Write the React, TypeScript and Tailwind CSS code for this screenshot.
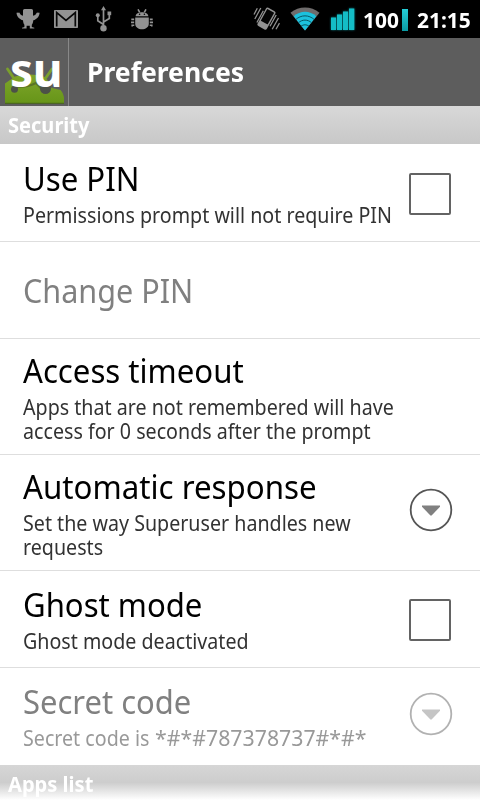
import React from "react";

type RowProps = {
  title: string;
  titleScale?: string;
  lines?: string[];
  code?: string;
  height: string;
  disabled?: boolean;
  last?: boolean;
  control?: "checkbox" | "menu";
};

function Line({ children, className }: { children: React.ReactNode; className: string }) {
  return <div className={`w-max origin-left whitespace-pre ${className}`}>{children}</div>;
}

function Checkbox() {
  return <div className="mr-[2px] mt-[2px] h-[42px] w-[42px] rounded-[2px] border-2 border-[#636363] bg-white" />;
}

function MenuButton({ disabled }: { disabled?: boolean }) {
  return (
    <svg width="44" height="44" viewBox="0 0 44 44" className={`mb-[6px] ${disabled ? "opacity-45" : ""}`}>
      <circle cx="22" cy="22" r="20.3" fill="none" stroke="#555" strokeWidth="1.8" />
      <path d="M13 17.5h18v1.2L22.6 27.6h-1.2L13 18.7z" fill="#808080" />
    </svg>
  );
}

function Row({ title, titleScale = "scale-x-[.944]", lines = [], code, height, disabled, last, control }: RowProps) {
  return (
    <div className={`flex shrink-0 items-center justify-between pl-[23px] pr-[27px] ${height} ${last ? "" : "border-b border-[#dedede]"}`}>
      <div className={`w-[372px] shrink-0 ${last ? "mb-[2px]" : ""}`}>
        <Line className={`text-[33px] leading-[39px] ${titleScale} ${disabled ? "text-[#808080]" : "text-black"}`}>{title}</Line>
        {lines.length > 0 && (
          <div className={`mt-[5px] text-[21px] leading-[24px] ${disabled ? "text-[#999]" : "text-[#323232]"}`}>
            {lines.map((l) => (
              <Line key={l} className="scale-x-[.936]">{l}</Line>
            ))}
          </div>
        )}
        {code && (
          <div className="mt-[5px] flex text-[21px] leading-[24px] text-[#999]">
            <div className="w-[132px]">
              <Line className="scale-x-[.936]">Secret code is</Line>
            </div>
            <Line className="scale-x-[1.014]">{code}</Line>
          </div>
        )}
      </div>
      {control === "checkbox" && <Checkbox />}
      {control === "menu" && <MenuButton disabled={disabled} />}
    </div>
  );
}

function GhostIcon() {
  return (
    <svg width="24" height="20" viewBox="0 0 24 20" fill="#929292">
      <path d="M7 1.5Q7 0 8.500 0h7q1.500 0 1.500 1.500v5.200q2.700-.3 4.200-3.500l.6.700.5-.500q.4.500 1.300.300c-.3 4-3 6.600-6.300 7.600-.2 2-.7 3.600-1.500 4.500v2.100l2.500.8v.800h-4.500v-2.700h-3.200v2.700H6v-.8l2.400-.8v-2.100C7.600 14.900 7.200 13.300 7 11.300 3.700 10.300.8 7.700.5 3.700q.9.200 1.300-.3l.5.500.7-.7Q4.500 6.400 7 6.700z" />
    </svg>
  );
}

function MailIcon() {
  return (
    <svg width="24" height="18" viewBox="0 0 24 18">
      <rect width="24" height="18" rx=".8" fill="#929292" />
      <path d="M2.700 16.500V2.500L12 10.500l9.300-8v14" fill="none" stroke="#080808" strokeWidth="1.700" />
    </svg>
  );
}

function UsbIcon() {
  return (
    <svg width="17" height="26" viewBox="0 0 17 26" fill="none" stroke="#929292" strokeWidth="1.700">
      <path d="M8.500 22V3M8.500 18.500l-5.700-3.700V10M8.500 16l5.800-3.500V8" />
      <path d="M8.500 0l2.500 4.300H6z" fill="#929292" stroke="none" />
      <circle cx="8.500" cy="22.200" r="3.200" fill="#929292" stroke="none" />
      <circle cx="2.800" cy="9.300" r="2" fill="#929292" stroke="none" />
      <path d="M12.500 5.500h3.700v3.700h-3.700z" fill="#929292" stroke="none" />
    </svg>
  );
}

function DebugIcon() {
  return (
    <svg width="22" height="21" viewBox="0 0 22 21" fill="#929292">
      <path d="M4.600 7.300C4.800 1.800 17.200 1.800 17.400 7.300zM4.200 8.500h13.600v6.300c0 7.300-13.600 7.300-13.600 0z" />
      <path d="M7 .3l1.700 3M15 .3l-1.700 3M3.200 10.400H.3M3.200 13.400H0M3.300 16.200h-2.100v1.300M18.800 10.400h2.900M18.800 13.400H22M18.700 16.200h2.100v1.300" fill="none" stroke="#929292" strokeWidth="1.600" />
      <circle cx="8.600" cy="5.300" r=".8" fill="#000" />
      <circle cx="13.400" cy="5.300" r=".8" fill="#000" />
    </svg>
  );
}

function VibrateIcon() {
  return (
    <svg width="27" height="24" viewBox="0 0 27 24" fill="none" stroke="#929292">
      <g transform="rotate(29 13.500 11.500)">
        <rect x="8.200" y="1.200" width="10.600" height="20.800" rx="1.800" fill="#929292" stroke="none" />
        <rect x="9.600" y="2.700" width="7.800" height="13.500" rx=".5" fill="#050505" stroke="none" />
      </g>
      <path d="M1 7.500L4.300 1.300M1.800 12L7.800 1M3.900 15.500L10.300 3.800M17 19.300L23.200 8M19.200 22.300L25.500 11M23 22.300l3.500-6.200" strokeWidth="1.300" />
    </svg>
  );
}

function WifiIcon() {
  return (
    <svg width="30" height="24" viewBox="0 0 30 24">
      <path d="M.5 5.800C8.800-1.300 21.200-1.300 29.500 5.800L15 23.500z" fill="#6f6c6c" />
      <path d="M3.700 9.300C10.200 3.300 19.800 3.300 26.300 9.300L15 23.500z" fill="#1cc1dc" />
      <path d="M5.700 12.600C11 7.600 19 7.600 24.300 12.600M8.400 15.800C12.200 12.200 17.800 12.200 21.600 15.800M11 19.200C13.300 17.300 16.700 17.300 19 19.200" fill="none" stroke="#075764" strokeWidth="1" />
    </svg>
  );
}

function SignalIcon() {
  return (
    <svg width="26" height="24" viewBox="0 0 26 24" fill="#14bdc6" className="drop-shadow-[0_0_1px_#087f87]">
      <rect x="1" y="10.500" width="5" height="12.500" />
      <rect x="7" y="7.500" width="5" height="15.500" />
      <rect x="13" y="4.500" width="5" height="18.500" />
      <rect x="19" y="1.500" width="5.300" height="21.500" />
    </svg>
  );
}

function SuIcon() {
  return (
    <svg width="68" height="68" viewBox="0 0 68 68">
      <defs>
        <linearGradient id="droid" x1="0" y1="0" x2="0" y2="1">
          <stop offset="0" stopColor="#7fa52b" />
          <stop offset="1" stopColor="#669518" />
        </linearGradient>
      </defs>
      <path d="M7.500 31l6.500 9.500M52 31l-6 8.500" stroke="#7ba02c" strokeWidth="2.800" strokeLinecap="round" />
      <path d="M5 65.500V45.500L15 38.500Q30 34.500 43.500 38.500Q48 40 50 49.500L60.500 52Q64 56 64 61v4.500z" fill="url(#droid)" />
      <path d="M13 48.500Q26 50 36 45L43 52.500" fill="none" stroke="#5b7427" strokeWidth="2" />
      <circle cx="14.500" cy="51.300" r="3.500" fill="#4c5148" />
      <circle cx="45.500" cy="50.500" r="5.500" fill="#4c5148" />
      <path d="M5 65.300h59" stroke="#46621d" strokeWidth="1" />
      <text y="49" fontFamily="Noto Sans" fontWeight="700" fontSize="46" fill="#fff">
        <tspan x="10">s</tspan>
        <tspan x="32.700">u</tspan>
      </text>
    </svg>
  );
}

export default function App() {
  return (
    <div className="flex h-[800px] w-[480px] flex-col overflow-hidden bg-white font-['Noto_Sans',sans-serif]">
      <div className="flex h-[38px] shrink-0 items-center bg-black pl-4 text-white">
        <div className="flex items-center">
          <GhostIcon />
          <div className="ml-[14px]"><MailIcon /></div>
          <div className="ml-[17px]"><UsbIcon /></div>
          <div className="ml-[19px]"><DebugIcon /></div>
        </div>
        <div className="ml-[100px] flex items-center">
          <VibrateIcon />
          <div className="ml-[10px]"><WifiIcon /></div>
          <div className="ml-[10px]"><SignalIcon /></div>
        </div>
        <div className="ml-[7px] flex w-[39px]">
          <Line className="scale-x-[.95] text-[22px] font-bold leading-[36px]">100</Line>
        </div>
        <div className="mt-[2px] h-[22px] w-[6px] bg-linear-to-b from-[#24cdd6] to-[#0a9aa3]" />
        <div className="ml-[9px]">
          <Line className="scale-x-[.95] text-[22px] font-bold leading-[36px]">21:15</Line>
        </div>
      </div>
      <div className="flex h-[68px] shrink-0 items-center bg-[#5d5d5d] text-white">
        <SuIcon />
        <div className="h-full w-px bg-[#888]" />
        <div className="pl-[18px]">
          <Line className="scale-x-[.983] text-[27px] font-bold">Preferences</Line>
        </div>
      </div>
      <div className="h-[38px] shrink-0 bg-linear-to-b from-[#d8d8d8] to-[#c8c8c8] pl-2 text-white">
        <Line className="scale-x-[.955] text-[21px] font-bold leading-[38px]">Security</Line>
      </div>
      <Row title="Use PIN" lines={["Permissions prompt will not require PIN"]} height="h-[98px]" control="checkbox" />
      <Row title="Change PIN" titleScale="scale-x-[.926]" height="h-[97px]" disabled />
      <Row title="Access timeout" lines={["Apps that are not remembered will have", "access for 0 seconds after the prompt"]} height="h-[116px]" />
      <Row title="Automatic response" titleScale="scale-x-[.947]" lines={["Set the way Superuser handles new", "requests"]} height="h-[116px]" control="menu" />
      <Row title="Ghost mode" titleScale="scale-x-[.942]" lines={["Ghost mode deactivated"]} height="h-[97px]" control="checkbox" />
      <Row title="Secret code" titleScale="scale-x-[.938]" code="*#*#787378737#*#*" height="h-[97px]" control="menu" disabled last />
      <div className="h-[35px] shrink-0 bg-linear-to-b from-[#d6d6d6] via-[#cdcdcd] via-50% to-white pl-2 text-white">
        <Line className="scale-x-[.957] text-[21px] font-bold leading-[38px]">Apps list</Line>
      </div>
    </div>
  );
}
